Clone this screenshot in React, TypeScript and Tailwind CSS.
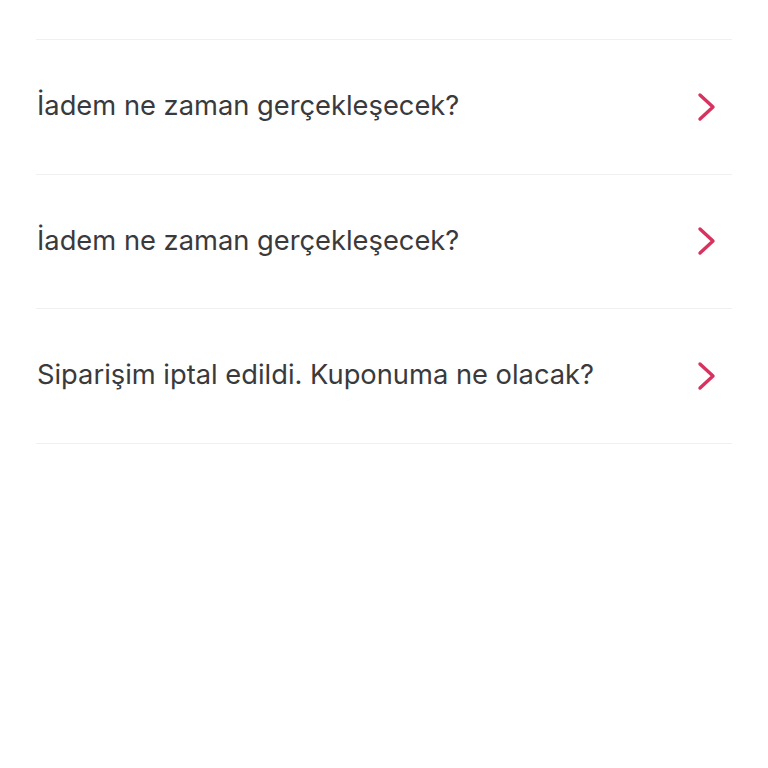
const questions = [
  "İadem ne zaman gerçekleşecek?",
  "İadem ne zaman gerçekleşecek?",
  "Siparişim iptal edildi. Kuponuma ne olacak?",
];

function Chevron() {
  return (
    <svg width="20" height="30" viewBox="0 0 20 30" className="mr-[15px]" fill="none">
      <path d="M3 3 L16 15 L3 27" stroke="#d8325e" strokeWidth="3.4" strokeLinecap="round" strokeLinejoin="round" />
    </svg>
  );
}

export default function App() {
  return (
    <div className="w-[768px] h-[768px] bg-white pt-[39px] pl-[36px] pr-[36px]" style={{ fontFamily: "Inter, 'Noto Sans', sans-serif" }}>
      <div className="border-t border-[#f0f0f0]">
        {questions.map((q, i) => (
          <div key={i} className="h-[134.5px] flex items-center justify-between border-b border-[#f0f0f0]">
            <span className="text-[27.3px] text-[#3a3a3c] pl-px">{q}</span>
            <Chevron />
          </div>
        ))}
      </div>
    </div>
  );
}
